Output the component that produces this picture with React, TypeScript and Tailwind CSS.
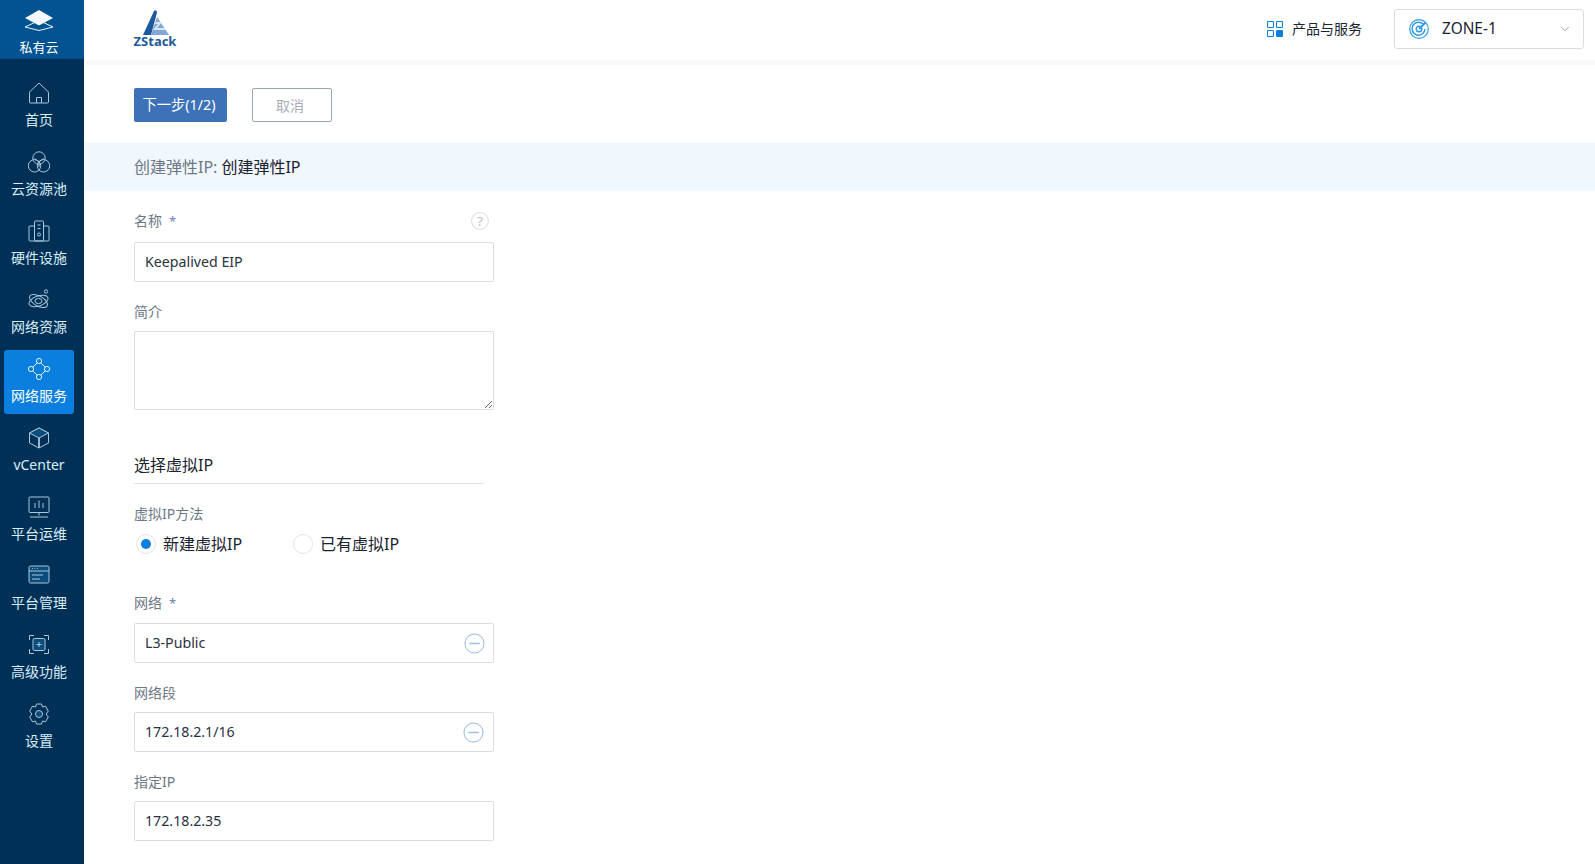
import * as React from "react";
import { ChevronDown } from "lucide-react";

const FONT = "font-['Noto_Sans','Noto_Sans_CJK_SC',sans-serif]";

const navIcons: Record<string, React.ReactNode> = {
  home: <path d="M1 10.500 11 1l10 9.500M1.500 10.500V20a1 1 0 0 0 1 1h17a1 1 0 0 0 1-1v-9.500M8.500 21v-5.500h5V21" />,
  pool: (
    <>
      <circle cx="11" cy="7" r="6.200" />
      <circle cx="6.500" cy="14.800" r="6.200" />
      <circle cx="15.500" cy="14.800" r="6.200" />
      <path d="M6.500 7.500 11 11l4.500-3.500M11 11v5" />
    </>
  ),
  hardware: (
    <>
      <rect x="6.500" y="1" width="9" height="20" rx="1" />
      <path d="M6.500 6H2a1 1 0 0 0-1 1v13a1 1 0 0 0 1 1h18a1 1 0 0 0 1-1V7a1 1 0 0 0-1-1h-4.500M9.500 5h3M9.500 8.500h3" />
      <circle cx="11" cy="14.500" r="1.500" />
    </>
  ),
  network: (
    <>
      <ellipse cx="10.500" cy="12" rx="10" ry="5" transform="rotate(30 10.500 12)" />
      <ellipse cx="10.500" cy="12" rx="10" ry="5" transform="rotate(-20 10.500 12)" />
      <ellipse cx="10.500" cy="12" rx="3.500" ry="2.600" />
      <circle cx="18" cy="2.500" r="1.700" />
    </>
  ),
  service: (
    <>
      <circle cx="11" cy="3" r="2.600" />
      <circle cx="3" cy="11" r="2.600" />
      <circle cx="19" cy="11" r="2.600" />
      <circle cx="11" cy="19" r="2.600" />
      <path d="m9.200 4.800-4.400 4.400M12.800 4.800l4.400 4.400M4.800 12.800l4.400 4.400M17.200 12.800l-4.400 4.400" />
    </>
  ),
  vcenter: (
    <>
      <path d="M11 1 20.500 6v10L11 21 1.500 16V6L11 1Z" />
      <path d="m1.500 6 9.500 5 9.500-5L11 1Z" fill="#0b4c7d" />
      <path d="M11 11v10" strokeWidth="1.800" />
    </>
  ),
  ops: (
    <>
      <rect x="1" y="1" width="20" height="15.500" rx="1" />
      <path d="M7 12V7M11 12V4.500M15 12V7M11 16.500v3M2 21h18" />
    </>
  ),
  manage: (
    <>
      <rect x="1" y="1" width="20" height="17" rx="1.500" fill="#0b4c7d" />
      <path d="M1 6h20M4 3.500h.800M6.500 3.500h.800M9 3.500h.800M4 10h11M4 14h8" />
    </>
  ),
  advanced: (
    <>
      <path d="M6 1.500H1.500V6M16 1.500h4.500V6M6 19.500H1.500V15M16 19.500h4.500V15" />
      <rect x="5" y="4.500" width="12" height="12" rx="1.500" fill="#0b4c7d" />
      <path d="M11 8v5M8.500 10.500h5" />
    </>
  ),
  settings: (
    <>
      <path d="M8.500 1h5l1 3 3-.8 2.800 4.800-2.200 3 2.200 3-2.800 4.800-3-.8-1 3h-5l-1-3-3 .8L1.700 14l2.200-3-2.200-3 2.800-4.800 3 .8 1-3Z" />
      <circle cx="11" cy="11" r="3.500" fill="#0b4c7d" />
    </>
  ),
};

const navItems = [
  { label: "首页", icon: "home" },
  { label: "云资源池", icon: "pool" },
  { label: "硬件设施", icon: "hardware" },
  { label: "网络资源", icon: "network" },
  { label: "网络服务", icon: "service", active: true },
  { label: "vCenter", icon: "vcenter" },
  { label: "平台运维", icon: "ops" },
  { label: "平台管理", icon: "manage" },
  { label: "高级功能", icon: "advanced" },
  { label: "设置", icon: "settings" },
];

function Sidebar() {
  return (
    <aside className="flex h-screen w-[84px] shrink-0 flex-col bg-[#003055] text-[#d9eefc]">
      <div className="flex h-[59px] flex-col items-center bg-[#005390] pr-[6px] pt-[10px] text-white">
        <svg viewBox="0 0 30 24" className="h-[24px] w-[30px]" fill="none">
          <path d="M15 13.500 29 20 15 23.500 1 20Z" transform="translate(0 -3)" stroke="#e8f3fb" strokeWidth="1" />
          <path d="M15 0 29 8 15 15.500 1 8Z" fill="#f4f9fd" />
        </svg>
        <span className="mt-[4px] text-[13px] leading-[18px]">私有云</span>
      </div>
      <nav className="flex flex-col pl-[4px] pt-[23px]">
        {navItems.map((item) => (
          <div
            key={item.label}
            className={
              item.active
                ? "-mt-[8px] mb-[13px] flex h-[64px] w-[70px] flex-col items-center rounded-[3px] bg-[#0a7fe0] pt-[9px] text-white"
                : "mb-[5px] flex h-[64px] w-[70px] flex-col items-center pt-[1px]"
            }
          >
            <svg
              viewBox="0 0 22 22"
              className="-my-[1px] h-[22px] w-[22px]"
              fill="none"
              stroke={item.active ? "#dff0fd" : "#a9c8dd"}
              strokeWidth="1"
            >
              {navIcons[item.icon]}
            </svg>
            <span className="mt-[7px] whitespace-nowrap text-[14px] leading-[20px]">{item.label}</span>
          </div>
        ))}
      </nav>
    </aside>
  );
}

function Header() {
  return (
    <header className="flex h-[65px] shrink-0 items-center justify-between border-b-[5px] border-[#f8f9fb] pb-[3px] pl-[49px] pr-[11px]">
      <div className="flex w-[44px] flex-col items-center pt-[2px]">
        <svg viewBox="0 0 30 26" className="h-[26px] w-[30px]">
          <path d="M14 1c1.500-1 3-.500 3 1.500L11 25H3Z" fill="#1c5a9c" />
          <path d="M17 7l12 18H11Z" fill="#7fa8d6" />
          <path d="M16 12h6l-5 6h8v2H13l5-6h-3Z" fill="#dce8f5" />
        </svg>
        <span className="-mt-[2px] text-[13px] font-bold leading-[15px] text-[#1d5a9a]">ZStack</span>
      </div>
      <div className="flex items-center">
        <svg viewBox="0 0 16 16" className="h-[16px] w-[16px]" fill="none" stroke="#0a7fe0" strokeWidth="1.100">
          <rect x="0.500" y="0.500" width="6" height="6" rx="1" />
          <rect x="9.500" y="0.500" width="6" height="6" rx="1" />
          <rect x="0.500" y="9.500" width="6" height="6" rx="1" />
          <rect x="9.500" y="9.500" width="6" height="6" rx="1" fill="#0a7fe0" />
        </svg>
        <span className="ml-[9px] text-[14px] text-[#1a2330]">产品与服务</span>
        <div className="ml-[32px] flex h-[40px] w-[190px] items-center rounded-[3px] border border-[#d9dde6] pl-[14px] pr-[11px]">
          <svg viewBox="0 0 20 20" className="h-[20px] w-[20px]" fill="none" stroke="#2f9be8">
            <circle cx="10" cy="10" r="9.300" strokeWidth="1.200" />
            <path d="M14 5A6.500 6.500 0 1 0 16 10" strokeWidth="1.500" />
            <circle cx="10" cy="10" r="2.800" strokeWidth="1.400" />
            <path d="m10 10 6.500-6.500" strokeWidth="1.800" />
          </svg>
          <span className="ml-[13px] flex-1 text-[15.4px] text-[#1a2330]">ZONE-1</span>
          <ChevronDown className="h-[14px] w-[14px] text-[#8f96a3]" strokeWidth={1.500} />
        </div>
      </div>
    </header>
  );
}

function Label({ text, required, className }: { text: string; required?: boolean; className?: string }) {
  return (
    <div className={"flex h-[20px] items-center text-[14px] leading-[20px] text-[#6d7785] " + (className ?? "")}>
      {text}
      {required && <span className="ml-[7px] text-[13px] text-[#6a7fb5]">*</span>}
    </div>
  );
}

function TextField({ value, clear, iconShift }: { value?: string; clear?: boolean; iconShift?: boolean }) {
  return (
    <div className="flex h-[40px] w-[360px] items-center justify-between rounded-[2px] border border-[#d9dde6] pl-[10px] pr-[8px] text-[14.2px] text-[#2a3240]">
      <span>{value}</span>
      {clear && (
        <svg
          viewBox="0 0 22 22"
          className={iconShift ? "mr-[1px] h-[21px] w-[21px]" : "h-[21px] w-[21px]"}
          fill="none"
          stroke="#9bbce4"
        >
          <circle cx="11" cy="11" r="10" strokeWidth="1.100" />
          <path d="M5.500 11h11" strokeWidth="1.500" />
        </svg>
      )}
    </div>
  );
}

function Radio({ label, checked, className }: { label: string; checked?: boolean; className?: string }) {
  return (
    <div className={"flex items-center " + (className ?? "")}>
      <span className="flex h-[20px] w-[20px] items-center justify-center rounded-full border border-[#dfe4ec]">
        {checked && <span className="h-[10px] w-[10px] rounded-full bg-[#0a7fe0]" />}
      </span>
      <span className="ml-[7px] text-[16px] leading-[20px] text-[#1a2330]">{label}</span>
    </div>
  );
}

export default function App() {
  return (
    <div className={"flex h-screen overflow-hidden bg-white " + FONT}>
      <Sidebar />
      <main className="flex min-w-0 flex-1 flex-col">
        <Header />
        <div className="flex gap-[25px] pl-[50px] pt-[23px]">
          <button className="h-[34px] w-[93px] rounded-[2px] bg-[#3d72b8] pr-[3px] text-[14.3px] text-white">下一步(1/2)</button>
          <button className="h-[34px] w-[80px] rounded-[2px] border border-[#9aa5b8] pr-[4px] text-[14px] text-[#a6adba]">取消</button>
        </div>
        <div className="mt-[20px] flex h-[49px] items-center bg-[#f0f7fd] pl-[50px] text-[16px] text-[#1a2330]">
          <span className="text-[#6d7785]">创建弹性IP:</span>
          <span className="ml-[4px]">创建弹性IP</span>
        </div>
        <form className="ml-[50px] flex w-[360px] flex-col">
          <div className="mt-[20px] flex items-center justify-between pr-[5px]">
            <Label text="名称" required />
            <svg viewBox="0 0 18 18" className="-mt-[1px] h-[18px] w-[18px]" fill="none" stroke="#d3dbe5">
              <circle cx="9" cy="9" r="8.400" />
              <text x="9" y="13.500" textAnchor="middle" fontSize="13" fill="#b4bdca" stroke="none">?</text>
            </svg>
          </div>
          <div className="mt-[11px]">
            <TextField value="Keepalived EIP" />
          </div>
          <Label text="简介" className="mt-[20px]" />
          <textarea
            readOnly
            className="mt-[9px] h-[79px] w-[360px] rounded-[2px] border border-[#d9dde6] outline-none"
          />
          <div className="mt-[44px] w-[350px] border-b border-[#dfe2e8] pb-[7px] text-[16px] leading-[22px] text-[#1a2330]">
            选择虚拟IP
          </div>
          <Label text="虚拟IP方法" className="mt-[20px]" />
          <div className="mt-[10px] flex">
            <Radio label="新建虚拟IP" checked className="ml-[2px]" />
            <Radio label="已有虚拟IP" className="ml-[51px]" />
          </div>
          <Label text="网络" required className="mt-[39px]" />
          <div className="mt-[10px]">
            <TextField value="L3-Public" clear />
          </div>
          <Label text="网络段" className="mt-[20px]" />
          <div className="mt-[9px]">
            <TextField value="172.18.2.1/16" clear iconShift />
          </div>
          <Label text="指定IP" className="mt-[20px]" />
          <div className="mt-[9px]">
            <TextField value="172.18.2.35" />
          </div>
        </form>
      </main>
    </div>
  );
}
